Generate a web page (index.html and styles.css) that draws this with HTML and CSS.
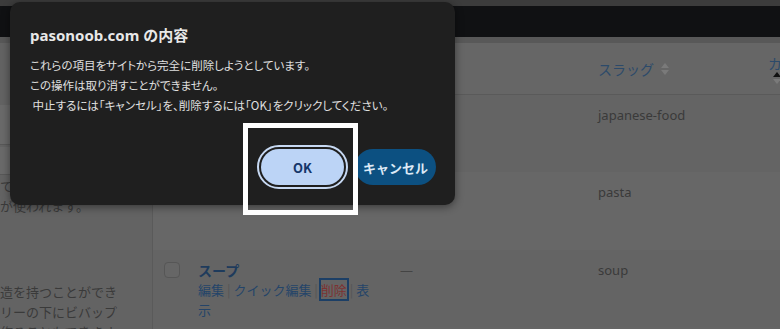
FILE: index.html
```html
<!DOCTYPE html>
<html lang="ja">
<head>
<meta charset="utf-8">
<title>タグ</title>
<link rel="stylesheet" href="styles.css">
</head>
<body>
<div class="topstrip"></div>
<div class="adminbar"></div>
<div class="subbar"></div>
<div class="main">
  <aside class="formcol">
    <div class="field f1"></div>
    <div class="field f2"></div>
    <p class="help h1">て<br>が使われます。</p>
    <p class="help h2">造を持つことができ<br>リーの下にビバップ<br>作ることもできます</p>
  </aside>
  <section class="tablecol">
    <div class="trow thead">
      <div class="c-cb"><span class="cb"></span></div>
      <div class="c-name"></div>
      <div class="c-desc"></div>
      <div class="c-slug"><span class="hlink">スラッグ</span><span class="sort"><i class="up"></i><i class="down"></i></span></div>
      <div class="c-count"><span class="hlink">カウント</span><span class="sort sorted"><i class="up"></i><i class="down"></i></span></div>
    </div>
    <div class="trow odd">
      <div class="c-cb"><span class="cb"></span></div>
      <div class="c-name"></div>
      <div class="c-desc"></div>
      <div class="c-slug">japanese-food</div>
      <div class="c-count"></div>
    </div>
    <div class="trow even">
      <div class="c-cb"><span class="cb"></span></div>
      <div class="c-name"></div>
      <div class="c-desc"></div>
      <div class="c-slug">pasta</div>
      <div class="c-count"></div>
    </div>
    <div class="trow odd">
      <div class="c-cb"><span class="cb"></span></div>
      <div class="c-name">
        <div class="rtitle">スープ</div>
        <div class="actions"><span class="act">編集</span> <span class="sep">|</span> <span class="act">クイック編集</span> <span class="sep">|</span> <span class="act del">削除</span> <span class="sep">|</span> <span class="act">表</span><span class="act">示</span></div>
      </div>
      <div class="c-desc">—</div>
      <div class="c-slug">soup</div>
      <div class="c-count"></div>
    </div>
  </section>
</div>

<div class="dialog">
  <div class="d-title">pasonoob.com の内容</div>
  <div class="d-body">これらの項目をサイトから完全に削除しようとしています。
この操作は取り消すことができません。
 中止するには「キャンセル」を、削除するには「OK」をクリックしてください。</div>
  <div class="d-buttons">
    <button class="btn ok">OK</button>
    <button class="btn cancel">キャンセル</button>
  </div>
</div>
<div class="annot"></div>
</body>
</html>
```

FILE: styles.css
```css
html, body {
  margin: 0;
  padding: 0;
}
body {
  width: 780px;
  height: 329px;
  overflow: hidden;
  background: #656565;
  font-family: "Noto Sans", "Noto Sans CJK JP", sans-serif;
  color: #3a3a3a;
  font-size: 13px;
  position: relative;
}
.topstrip { height: 6px; background: #3c3c3c; }
.adminbar { height: 31px; background: #101113; }
.subbar { height: 6px; background: #585858; }

.main {
  display: flex;
  align-items: stretch;
  height: 286px;
}
.formcol {
  width: 152px;
  flex: 0 0 152px;
  border-right: 1px solid #5a5a5a;
  background: #636363;
  overflow: hidden;
}
.field {
  background: #6a6a6a;
  border-bottom: 1px solid #585858;
}
.f1 { margin-top: 62px; height: 39px; }
.f2 { margin-top: 2px; height: 27px; }
.help {
  margin: 0;
  font-family: "Noto Sans CJK JP", sans-serif;
  font-size: 13px;
  line-height: 20px;
  color: #3a3a3a;
  white-space: nowrap;
}
.h1 { margin-top: 1px; }
.h2 { margin-top: 66px; }

.tablecol {
  flex: 1;
  min-width: 0;
  overflow: hidden;
}
.trow {
  display: grid;
  grid-template-columns: 45px 202px 198px 170px 1fr;
  line-height: 20px;
}
.thead {
  height: 52px;
  align-items: center;
  border-bottom: 1px solid #5a5a5a;
  box-sizing: border-box;
  background: #666;
  font-size: 14px;
}
.odd { background: #646464; height: 77px; }
.even { background: #676767; height: 78px; }
.trow > div { padding-top: 10px; }
.thead > div { padding-top: 0; }
.c-cb { padding-left: 11px; }
.odd .c-cb, .even .c-cb { padding-top: 12px !important; }
.cb {
  display: block;
  width: 16px;
  height: 16px;
  box-sizing: border-box;
  border: 1px solid #565656;
  border-radius: 4px;
  background: #666;
}
.hlink { color: #2c4a6a; font-family: "Noto Sans CJK JP", sans-serif; }
.c-slug { white-space: nowrap; }
.c-slug .hlink { vertical-align: middle; }
.sort {
  display: inline-flex;
  flex-direction: column;
  gap: 2px;
  vertical-align: middle;
  margin-left: 7px;
}
.sort i {
  display: block;
  width: 0;
  height: 0;
  border-left: 4px solid transparent;
  border-right: 4px solid transparent;
}
.sort .up { border-bottom: 5px solid #7a7a7a; }
.sort .down { border-top: 5px solid #7a7a7a; }
.c-count { white-space: nowrap; }
.thead .c-count { line-height: 17px; padding-top: 2px; }
.c-count .sort { display: flex; margin-left: 5px; margin-top: 0; }
.sort.sorted .up { border-bottom-color: #111; }

.rtitle {
  font-family: "Noto Sans CJK JP", sans-serif;
  font-weight: bold;
  font-size: 14px;
  line-height: 20px;
  height: 20px;
  color: #1e3b5c;
}
.actions {
  font-family: "Noto Sans CJK JP", sans-serif;
  color: #244469;
  font-size: 13px;
  width: 180px;
  line-height: 20px;
}
.sep { color: #555; }
.del {
  color: #7c3232;
  outline: 2px solid #1c3f66;
  outline-offset: 0px;
}
.c-desc { color: #444; }

.dialog {
  position: absolute;
  left: 10px;
  top: 2px;
  width: 445px;
  box-sizing: border-box;
  padding: 23px 19px 20px 20px;
  background: #1f1f1f;
  border-radius: 10px;
  box-shadow: 0 2px 8px rgba(0,0,0,0.45);
  color: #e3e3e3;
  font-family: "Noto Sans", "Noto Sans CJK JP", sans-serif;
}
.d-title {
  font-size: 15px;
  line-height: 20px;
  font-weight: bold;
  color: #e8e8e8;
}
.d-body {
  margin-top: 10px;
  font-size: 11.5px;
  line-height: 20px;
  white-space: pre-wrap;
  font-family: "Noto Sans CJK JP", sans-serif;
  font-feature-settings: "palt";
  color: #e0e0e0;
}
.d-buttons {
  margin-top: 34px;
  display: flex;
  justify-content: flex-end;
  gap: 11px;
}
.btn {
  height: 36px;
  border: none;
  border-radius: 18px;
  font-family: "Noto Sans CJK JP", sans-serif;
  font-weight: bold;
  font-size: 13px;
  padding: 0;
}
.ok {
  width: 83px;
  background: #bcd4f6;
  color: #15366a;
  outline: 2px solid #c7d9f3;
  outline-offset: 2px;
}
.cancel {
  width: 81px;
  background: #0c5081;
  color: #dce9f6;
}

.annot {
  position: absolute;
  left: 243px;
  top: 123px;
  width: 115px;
  height: 92px;
  box-sizing: border-box;
  border: 5px solid #ffffff;
}
```
